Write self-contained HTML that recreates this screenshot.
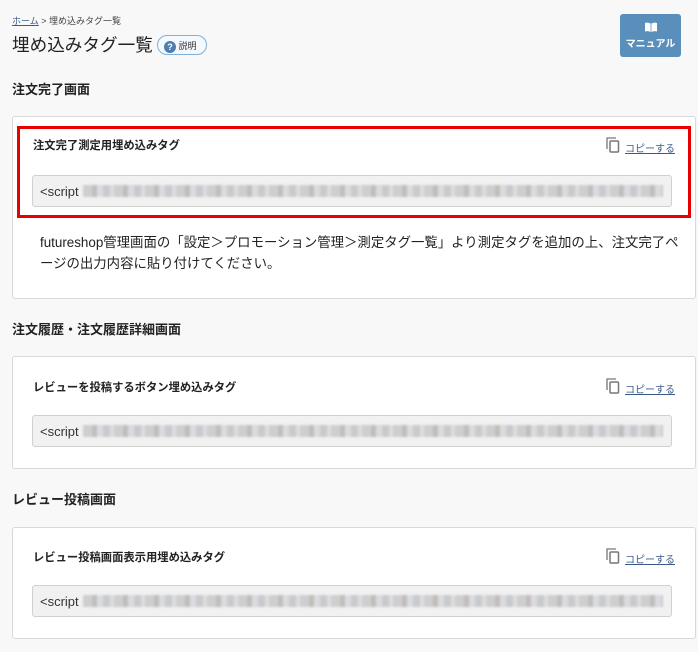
<!DOCTYPE html>
<html><head><meta charset="utf-8"><style>
*{box-sizing:border-box;margin:0;padding:0}
body{width:698px;height:652px;background:#f8f8f8;font-family:"Liberation Sans","Noto Sans CJK JP",sans-serif;color:#222;position:relative;overflow:hidden}
.a{position:absolute;white-space:nowrap}
.card{position:absolute;left:12px;width:684px;background:#fff;border:1px solid #d8d8d8;border-radius:3px}
.h{font-size:13px;font-weight:bold;color:#222}
.lbl{font-size:11.3px;font-weight:bold;color:#222}
.copy{font-size:10px;color:#3a5a8a;text-decoration:underline}
.inp{position:absolute;left:32px;width:640px;height:32px;background:#f1f1f1;border:1px solid #d0d0d0;border-radius:3px;font-size:13px;color:#333;padding:8px 0 0 7px;white-space:nowrap;overflow:hidden}
.blur{display:inline-block;width:580px;height:12px;vertical-align:-1px;margin-left:4px;background:repeating-linear-gradient(90deg,#c9c9cb 0 9px,#b9b5b3 9px 14px,#d6d8dc 14px 20px,#c2c4c8 20px 27px,#dadada 27px 31px);opacity:.85;filter:blur(1px)}
.ci{position:absolute;width:14px;height:16px}
</style></head><body>
<div class="a" style="left:12px;top:14px;font-size:9px;color:#444"><span style="color:#3a5a8a;text-decoration:underline">ホーム</span> &gt; 埋め込みタグ一覧</div>
<div class="a" style="left:12px;top:32px;font-size:17.6px;color:#222">埋め込みタグ一覧</div>
<div class="a" style="left:157px;top:35px;width:50px;height:20px;border:1px solid #7fb0d8;border-radius:10px;background:#f4f9fd;font-size:9px;color:#333;padding:3px 0 0 6px"><span style="display:inline-block;width:12px;height:12px;border-radius:50%;background:#4d7fae;color:#fff;font-size:9px;font-weight:bold;text-align:center;line-height:12px;vertical-align:-1px">?</span> 説明</div>
<div class="a" style="left:620px;top:14px;width:61px;height:43px;background:#5a8fbb;border-radius:3px;color:#fff;font-size:10px;font-weight:bold;text-align:center;padding-top:8px">
<svg width="12" height="10" viewBox="0 0 12 10" style="display:block;margin:0 auto 3px"><path d="M0 1Q3 0 5.6 1.5V10Q3 8.5 0 9.5Z M12 1Q9 0 6.4 1.5V10Q9 8.5 12 9.5Z" fill="#fff"/></svg>マニュアル</div>

<div class="a h" style="left:12px;top:79px">注文完了画面</div>
<div class="card" style="top:116px;height:183px">
<div class="a" style="left:4px;top:9px;width:674px;height:92px;border:3px solid #e60000"></div>
<div class="a lbl" style="left:20px;top:20px">注文完了測定用埋め込みタグ</div>
<div class="a copy" style="left:612px;top:23px">コピーする</div>
<div class="a" style="left:27px;top:115px;font-size:13.4px;line-height:21px;color:#222;white-space:normal;width:650px">futureshop管理画面の「設定＞プロモーション管理＞測定タグ一覧」より測定タグを追加の上、注文完了ページの出力内容に貼り付けてください。</div>
</div>
<div class="inp" style="top:175px">&lt;script<span class="blur"></span></div>

<div class="a h" style="left:12px;top:319px">注文履歴・注文履歴詳細画面</div>
<div class="card" style="top:356px;height:113px">
<div class="a lbl" style="left:20px;top:22px">レビューを投稿するボタン埋め込みタグ</div>
<div class="a copy" style="left:612px;top:24px">コピーする</div>
</div>
<div class="inp" style="top:415px">&lt;script<span class="blur"></span></div>

<div class="a h" style="left:12px;top:489px">レビュー投稿画面</div>
<div class="card" style="top:527px;height:112px">
<div class="a lbl" style="left:20px;top:21px">レビュー投稿画面表示用埋め込みタグ</div>
<div class="a copy" style="left:612px;top:23px">コピーする</div>
</div>
<div class="inp" style="top:585px">&lt;script<span class="blur"></span></div>

<svg class="ci" style="left:606px;top:137px" viewBox="0 0 14 16"><path d="M1 12V1H10" fill="none" stroke="#777" stroke-width="1.3"/><rect x="4" y="4" width="8.5" height="11" rx="1" fill="none" stroke="#777" stroke-width="1.5"/></svg>
<svg class="ci" style="left:606px;top:378px" viewBox="0 0 14 16"><path d="M1 12V1H10" fill="none" stroke="#777" stroke-width="1.3"/><rect x="4" y="4" width="8.5" height="11" rx="1" fill="none" stroke="#777" stroke-width="1.5"/></svg>
<svg class="ci" style="left:606px;top:548px" viewBox="0 0 14 16"><path d="M1 12V1H10" fill="none" stroke="#777" stroke-width="1.3"/><rect x="4" y="4" width="8.5" height="11" rx="1" fill="none" stroke="#777" stroke-width="1.5"/></svg>
</body></html>
